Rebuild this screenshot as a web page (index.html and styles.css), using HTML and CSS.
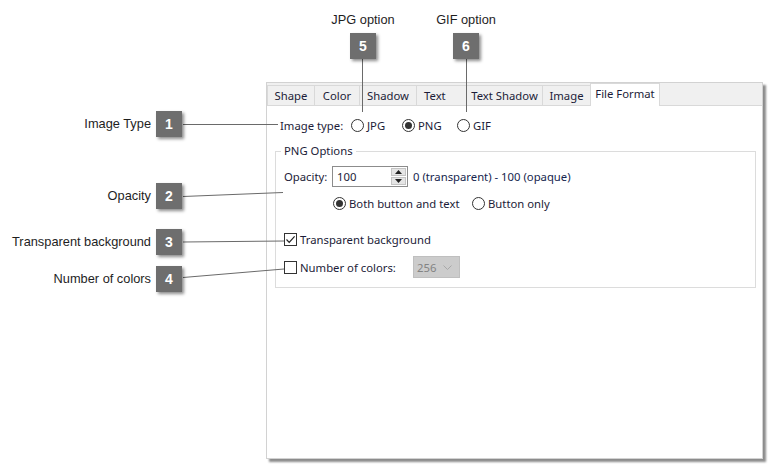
FILE: index.html
```html
<!DOCTYPE html>
<html>
<head>
<meta charset="utf-8">
<link rel="stylesheet" href="styles.css">
</head>
<body>
<div class="canvas">
  <div class="window">
    <div class="tabs">
      <div class="tab t-shape">Shape</div>
      <div class="tab t-color">Color</div>
      <div class="tab t-shadow">Shadow</div>
      <div class="tab t-text">Text</div>
      <div class="tab t-tshadow">Text Shadow</div>
      <div class="tab t-image">Image</div>
      <div class="tab t-file active">File Format</div>
    </div>
    <div class="page">
      <div class="row-type">
        <span class="lbl-type">Image type:</span>
        <span class="opt opt-jpg"><span class="radio"></span>JPG</span>
        <span class="opt opt-png"><span class="radio on"></span>PNG</span>
        <span class="opt opt-gif"><span class="radio"></span>GIF</span>
      </div>
      <fieldset class="group">
        <legend>PNG Options</legend>
        <div class="row-opacity">
          <span class="lbl-opacity">Opacity:</span>
          <div class="spin">
            <div class="spin-field">100</div>
            <div class="spin-btns">
              <div class="spin-btn"><svg width="7" height="4" viewBox="0 0 7 4"><path d="M0 4 L3.5 0 L7 4Z" fill="#222"/></svg></div>
              <div class="spin-btn"><svg width="7" height="4" viewBox="0 0 7 4"><path d="M0 0 L7 0 L3.5 4Z" fill="#222"/></svg></div>
            </div>
          </div>
          <span class="range">0 (transparent) - 100 (opaque)</span>
        </div>
        <div class="row-mode">
          <span class="opt opt-both"><span class="radio on"></span>Both button and text</span>
          <span class="opt"><span class="radio"></span>Button only</span>
        </div>
        <div class="row-check">
          <span class="check"><svg width="11" height="11" viewBox="0 0 11 11"><path d="M1.5 5.5 L4.2 8.3 L9.6 2.4" fill="none" stroke="#222" stroke-width="1.2"/></svg></span>
          <span>Transparent background</span>
        </div>
        <div class="row-colors">
          <span class="check"></span>
          <span class="lbl-colors">Number of colors:</span>
          <div class="combo"><span>256</span><svg width="9" height="5" viewBox="0 0 9 5"><path d="M0.5 0.5 L4.5 4.5 L8.5 0.5" fill="none" stroke="#a8a8a8" stroke-width="1"/></svg></div>
        </div>
      </fieldset>
    </div>
  </div>

  <svg class="leaders" width="774" height="469" viewBox="0 0 774 469">
    <g stroke="#6a6a6a" stroke-width="1" fill="none">
      <line x1="183" y1="124.5" x2="278" y2="124.5"/>
      <line x1="183" y1="196.5" x2="283" y2="192.5"/>
      <line x1="183" y1="242" x2="284" y2="241"/>
      <line x1="183" y1="277.5" x2="284" y2="269"/>
      <line x1="362.5" y1="59" x2="362.5" y2="112"/>
      <line x1="466.5" y1="59" x2="466.5" y2="112"/>
    </g>
  </svg>

  <div class="callout c1"><span class="cap">Image Type</span><span class="num">1</span></div>
  <div class="callout c2"><span class="cap">Opacity</span><span class="num">2</span></div>
  <div class="callout c3"><span class="cap">Transparent background</span><span class="num">3</span></div>
  <div class="callout c4"><span class="cap">Number of colors</span><span class="num">4</span></div>
  <div class="callout-top c5"><span class="cap">JPG option</span><span class="num">5</span></div>
  <div class="callout-top c6"><span class="cap">GIF option</span><span class="num">6</span></div>
</div>
</body>
</html>
```

FILE: styles.css
```css
* { box-sizing: border-box; }
html, body { margin: 0; padding: 0; background: #fff; }

.canvas {
  position: relative;
  width: 774px;
  height: 469px;
  overflow: hidden;
  padding: 82px 0 0 266px;
  font-family: "Liberation Sans", Arial, sans-serif;
}

/* dialog window */
.window {
  width: 497px;
  height: 377px;
  border: 1px solid #d2d2d2;
  background: #fff;
  box-shadow: 3px 3px 2px rgba(0, 0, 0, 0.45);
  font-family: "Noto Sans", "Segoe UI", sans-serif;
  font-size: 11.3px;
  color: #1c1c38;
  display: flex;
  flex-direction: column;
}

.tabs {
  flex: none;
  display: flex;
  align-items: flex-end;
  height: 23px;
  background: #f0f0f0;
  border-bottom: 1px solid #d9d9d9;
}
.tab {
  height: 20px;
  line-height: 19px;
  text-align: center;
  background: #f0f0f0;
  border-top: 1px solid #d9d9d9;
  border-right: 1px solid #d9d9d9;
  white-space: nowrap;
}
.tab.t-shape { width: 48px; border-left: 1px solid #d9d9d9; }
.tab.t-color { width: 45px; }
.tab.t-shadow { width: 57px; }
.tab.t-text { width: 50px; text-align: left; padding-left: 7px; }
.tab.t-tshadow { width: 76px; }
.tab.t-image { width: 48px; }
.tab.t-file { width: 70px; margin-left: -1px; }
.tab.active {
  position: relative;
  height: 23px;
  margin-bottom: -1px;
  line-height: 20px;
  background: #fff;
  border-left: 1px solid #d9d9d9;
}

.page {
  flex: 1;
  padding: 0 0 0 8px;
}

.row-type {
  display: flex;
  align-items: center;
  height: 18px;
  margin-top: 10px;
  padding-left: 5px;
}
.lbl-type { width: 71px; }

.opt {
  display: inline-flex;
  align-items: center;
  white-space: nowrap;
}
.opt-jpg { width: 51px; }
.opt-png { width: 55px; }
.opt-both { width: 139px; }

.radio {
  width: 13px;
  height: 13px;
  border: 1px solid #333;
  border-radius: 50%;
  background: #fff;
  margin-right: 3px;
  display: inline-flex;
  align-items: center;
  justify-content: center;
  flex: none;
}
.radio.on::after {
  content: "";
  width: 7px;
  height: 7px;
  border-radius: 50%;
  background: #333;
}

.group {
  margin: 9px 0 0 0;
  width: 481px;
  padding: 0 8px 9px 8px;
  border: 1px solid #dcdcdc;
  min-inline-size: 0;
}
.group legend {
  padding: 0 3px;
  margin-left: -3px;
  line-height: 16px;
}

.row-opacity {
  display: flex;
  align-items: center;
  height: 21px;
  margin-top: 7px;
}
.lbl-opacity { width: 48px; }
.spin {
  display: flex;
  width: 76px;
  height: 21px;
  border: 1px solid #8c8c8c;
  background: #fff;
}
.spin-field {
  flex: 1;
  padding-left: 4px;
  line-height: 19px;
}
.spin-btns {
  width: 16px;
  display: flex;
  flex-direction: column;
  gap: 1px;
  padding: 1px 1px 1px 0;
}
.spin-btn {
  flex: 1;
  background: #e5e5e5;
  border: 1px solid #c4c4c4;
  display: flex;
  align-items: center;
  justify-content: center;
}
.range { margin-left: 5px; color: #16264e; }

.row-mode {
  display: flex;
  align-items: center;
  height: 16px;
  margin-top: 8px;
  padding-left: 49px;
}

.row-check {
  display: flex;
  align-items: center;
  height: 17px;
  margin-top: 20px;
}
.check {
  width: 13px;
  height: 13px;
  border: 1px solid #333;
  background: #fff;
  margin-right: 3px;
  display: inline-flex;
  align-items: center;
  justify-content: center;
  flex: none;
}

.row-colors {
  display: flex;
  align-items: center;
  height: 22px;
  margin-top: 8px;
}
.lbl-colors { width: 113px; }
.combo {
  width: 47px;
  height: 22px;
  background: #cccccc;
  border: 1px solid #bfbfbf;
  color: #838383;
  display: flex;
  align-items: center;
  justify-content: space-between;
  padding: 0 7px 0 3px;
}

/* annotations */
.leaders {
  position: absolute;
  left: 0;
  top: 0;
  pointer-events: none;
}

.num {
  width: 26px;
  height: 26px;
  background: #6e6e6e;
  color: #fff;
  font-weight: bold;
  font-size: 14px;
  display: flex;
  align-items: center;
  justify-content: center;
  box-shadow: 2px 2px 3px rgba(0, 0, 0, 0.45);
  flex: none;
}
.cap {
  font-size: 12.8px;
  color: #1e1e1e;
  white-space: nowrap;
  line-height: 16px;
}

.callout {
  position: absolute;
  right: 592px;
  display: flex;
  align-items: center;
  gap: 5px;
}
.c1 { top: 111px; }
.c2 { top: 183px; }
.c3 { top: 229px; }
.c4 { top: 266px; }

.callout-top {
  position: absolute;
  top: 12px;
  width: 100px;
  display: flex;
  flex-direction: column;
  align-items: center;
  gap: 5px;
}
.c5 { left: 313px; }
.c6 { left: 416px; }
```
